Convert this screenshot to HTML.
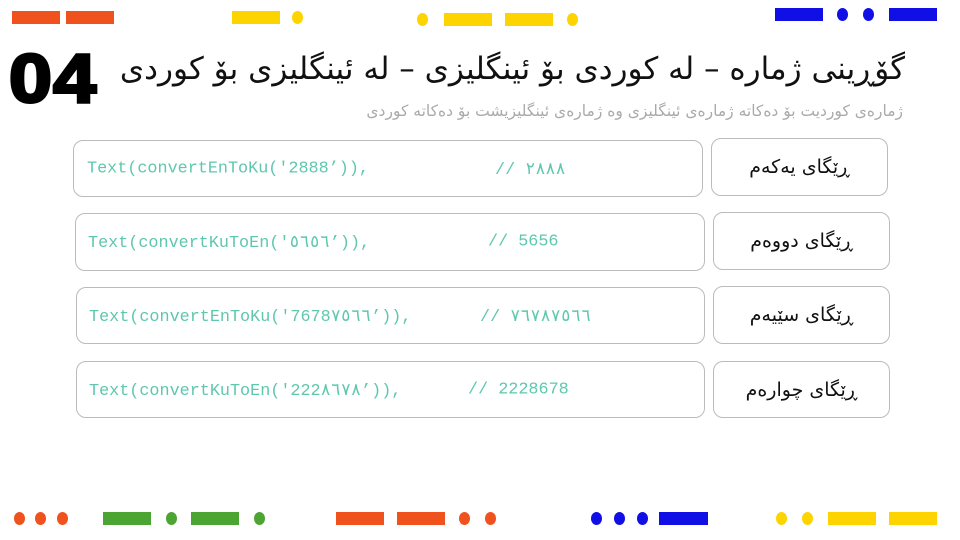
<!DOCTYPE html><html><head><meta charset="utf-8"><style>
body{margin:0;width:960px;height:540px;position:relative;background:#fff;overflow:hidden;font-family:"Liberation Sans","Noto Sans CJK SC",sans-serif}
.r,.c{position:absolute;height:13px}
.r{width:48px}.c{width:11px;border-radius:50%}
.o{background:#f0521e}.y{background:#fed400}.b{background:#1010e6}.g{background:#4ca532}
.box{position:absolute;border:1px solid #bbb;border-radius:10px;box-sizing:border-box}
.code{font-family:"Liberation Mono","DejaVu Sans Mono",monospace;font-size:16.8px;color:#5ec7ae;white-space:pre}
.code span{position:absolute;top:50%;transform:translateY(-50%)}
.lab{display:flex;align-items:center;justify-content:center;font-size:19px;color:#111;direction:rtl;font-family:"DejaVu Sans",sans-serif}
</style></head><body>
<div class="r o" style="left:12px;top:11px"></div><div class="r o" style="left:66px;top:11px"></div>
<div class="r y" style="left:232px;top:11px"></div><div class="c y" style="left:292px;top:11px"></div>
<div class="c y" style="left:417px;top:13px"></div><div class="r y" style="left:444px;top:13px"></div><div class="r y" style="left:505px;top:13px"></div><div class="c y" style="left:567px;top:13px"></div>
<div class="r b" style="left:775px;top:8px"></div><div class="c b" style="left:837px;top:8px"></div><div class="c b" style="left:863px;top:8px"></div><div class="r b" style="left:889px;top:8px"></div>

<div style="position:absolute;left:9px;top:44px;font-size:69px;font-weight:bold;font-family:'Liberation Sans';line-height:69px;transform:scaleX(1.12);transform-origin:left top;-webkit-text-stroke:3px #000;letter-spacing:1px">04</div>
<div style="position:absolute;right:55px;top:51px;font-size:31px;direction:rtl;font-family:'DejaVu Sans',sans-serif;color:#111">گۆڕینی ژمارە – لە کوردی بۆ ئینگلیزی – لە ئینگلیزی بۆ کوردی</div>
<div style="position:absolute;right:57px;top:102px;font-size:15.5px;direction:rtl;color:#aaa;font-family:'DejaVu Sans',sans-serif">ژمارەی کوردیت بۆ دەکاتە ژمارەی ئینگلیزی وە ژمارەی ئینگلیزیشت بۆ دەکاتە کوردی</div>

<div class="box code" style="left:73px;top:140px;width:630px;height:57px"><span style="left:13px">Text(convertEnToKu('2888’)),</span><span style="left:421px">// ٢٨٨٨</span></div>
<div class="box lab" style="left:711px;top:138px;width:177px;height:58px">ڕێگای یەکەم</div>
<div class="box code" style="left:75px;top:213px;width:630px;height:58px"><span style="left:12px">Text(convertKuToEn('٥٦٥٦’)),</span><span style="left:412px">// 5656</span></div>
<div class="box lab" style="left:713px;top:212px;width:177px;height:58px">ڕێگای دووەم</div>
<div class="box code" style="left:76px;top:287px;width:629px;height:57px"><span style="left:12px">Text(convertEnToKu('7678٧٥٦٦’)),</span><span style="left:403px">// ٧٦٧٨٧٥٦٦</span></div>
<div class="box lab" style="left:713px;top:286px;width:177px;height:58px">ڕێگای سێیەم</div>
<div class="box code" style="left:76px;top:361px;width:629px;height:57px"><span style="left:12px">Text(convertKuToEn('222٨٦٧٨’)),</span><span style="left:391px">// 2228678</span></div>
<div class="box lab" style="left:713px;top:361px;width:177px;height:57px">ڕێگای چوارەم</div>

<div class="c o" style="left:14px;top:512px"></div><div class="c o" style="left:35px;top:512px"></div><div class="c o" style="left:57px;top:512px"></div>
<div class="r g" style="left:103px;top:512px"></div><div class="c g" style="left:166px;top:512px"></div><div class="r g" style="left:191px;top:512px"></div><div class="c g" style="left:254px;top:512px"></div>
<div class="r o" style="left:336px;top:512px"></div><div class="r o" style="left:397px;top:512px"></div><div class="c o" style="left:459px;top:512px"></div><div class="c o" style="left:485px;top:512px"></div>
<div class="c b" style="left:591px;top:512px"></div><div class="c b" style="left:614px;top:512px"></div><div class="c b" style="left:637px;top:512px"></div><div class="r b" style="left:659px;top:512px;width:49px"></div>
<div class="c y" style="left:776px;top:512px"></div><div class="c y" style="left:802px;top:512px"></div><div class="r y" style="left:828px;top:512px"></div><div class="r y" style="left:889px;top:512px"></div>
</body></html>
